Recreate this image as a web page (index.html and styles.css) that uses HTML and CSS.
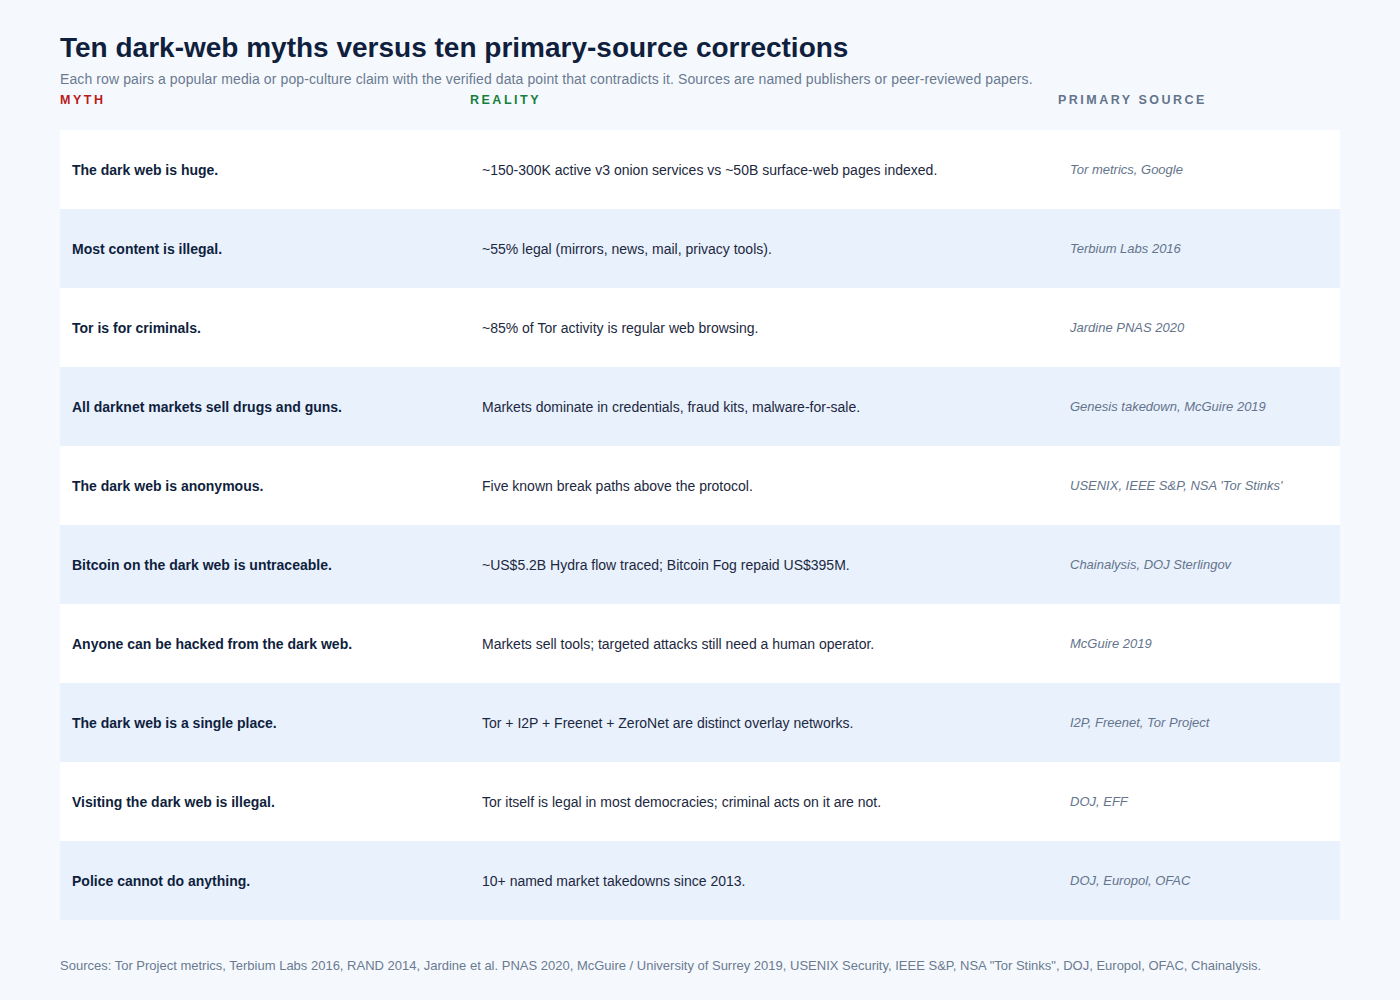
FILE: index.html
```html
<!DOCTYPE html>
<html lang="en">
<head>
<meta charset="utf-8">
<title>Dark-web myths vs primary-source corrections</title>
<link rel="stylesheet" href="styles.css">
</head>
<body>
<main class="page">
  <h1 class="title">Ten dark-web myths versus ten primary-source corrections</h1>
  <p class="subtitle">Each row pairs a popular media or pop-culture claim with the verified data point that contradicts it. Sources are named publishers or peer-reviewed papers.</p>
  <div class="head">
    <div class="h h-myth">MYTH</div>
    <div class="h h-reality">REALITY</div>
    <div class="h h-source">PRIMARY SOURCE</div>
  </div>
  <div class="table">
    <div class="row"><div class="myth">The dark web is huge.</div><div class="reality">~150-300K active v3 onion services vs ~50B surface-web pages indexed.</div><div class="source">Tor metrics, Google</div></div>
    <div class="row alt"><div class="myth">Most content is illegal.</div><div class="reality">~55% legal (mirrors, news, mail, privacy tools).</div><div class="source">Terbium Labs 2016</div></div>
    <div class="row"><div class="myth">Tor is for criminals.</div><div class="reality">~85% of Tor activity is regular web browsing.</div><div class="source">Jardine PNAS 2020</div></div>
    <div class="row alt"><div class="myth">All darknet markets sell drugs and guns.</div><div class="reality">Markets dominate in credentials, fraud kits, malware-for-sale.</div><div class="source">Genesis takedown, McGuire 2019</div></div>
    <div class="row"><div class="myth">The dark web is anonymous.</div><div class="reality">Five known break paths above the protocol.</div><div class="source">USENIX, IEEE S&amp;P, NSA 'Tor Stinks'</div></div>
    <div class="row alt"><div class="myth">Bitcoin on the dark web is untraceable.</div><div class="reality">~US$5.2B Hydra flow traced; Bitcoin Fog repaid US$395M.</div><div class="source">Chainalysis, DOJ Sterlingov</div></div>
    <div class="row"><div class="myth">Anyone can be hacked from the dark web.</div><div class="reality">Markets sell tools; targeted attacks still need a human operator.</div><div class="source">McGuire 2019</div></div>
    <div class="row alt"><div class="myth">The dark web is a single place.</div><div class="reality">Tor + I2P + Freenet + ZeroNet are distinct overlay networks.</div><div class="source">I2P, Freenet, Tor Project</div></div>
    <div class="row"><div class="myth">Visiting the dark web is illegal.</div><div class="reality">Tor itself is legal in most democracies; criminal acts on it are not.</div><div class="source">DOJ, EFF</div></div>
    <div class="row alt"><div class="myth">Police cannot do anything.</div><div class="reality">10+ named market takedowns since 2013.</div><div class="source">DOJ, Europol, OFAC</div></div>
  </div>
  <p class="footer">Sources: Tor Project metrics, Terbium Labs 2016, RAND 2014, Jardine et al. PNAS 2020, McGuire / University of Surrey 2019, USENIX Security, IEEE S&amp;P, NSA "Tor Stinks", DOJ, Europol, OFAC, Chainalysis.</p>
</main>
</body>
</html>
```
FILE: styles.css
```css
html, body {
  margin: 0;
  padding: 0;
  background: #f5f9fe;
}
body {
  font-family: "Liberation Sans", Arial, sans-serif;
  color: #0f1f3d;
}
.page {
  padding: 31px 60px 0 60px;
}
.title {
  margin: 0;
  font-size: 28px;
  line-height: 34px;
  font-weight: 700;
  color: #0f1f3d;
}
.subtitle {
  margin: 5px 0 0 0;
  font-size: 14px;
  line-height: 18px;
  letter-spacing: 0.1px;
  color: #6b7a90;
}
.head {
  display: grid;
  grid-template-columns: 410px 588px 282px;
  margin-top: 4px;
  height: 38px;
}
.h {
  font-size: 12.5px;
  font-weight: 700;
  letter-spacing: 2.5px;
  line-height: 16px;
}
.h-myth { color: #b91c1c; }
.h-reality { color: #15803d; }
.h-source { color: #64748b; }
.table {
  display: flex;
  flex-direction: column;
}
.row {
  display: grid;
  grid-template-columns: 410px 588px 282px;
  height: 79px;
  align-items: center;
  background: #ffffff;
}
.row.alt {
  background: #e9f1fd;
}
.row > div {
  padding: 0 12px;
  font-size: 14px;
  line-height: 18px;
}
.myth {
  font-weight: 700;
  color: #0f1f3d;
}
.reality {
  color: #1c2840;
}
.row > .source {
  font-style: italic;
  color: #64748b;
  font-size: 13px;
}
.footer {
  margin: 38px 0 0 0;
  font-size: 13px;
  line-height: 16px;
  color: #6b7a90;
}
```
